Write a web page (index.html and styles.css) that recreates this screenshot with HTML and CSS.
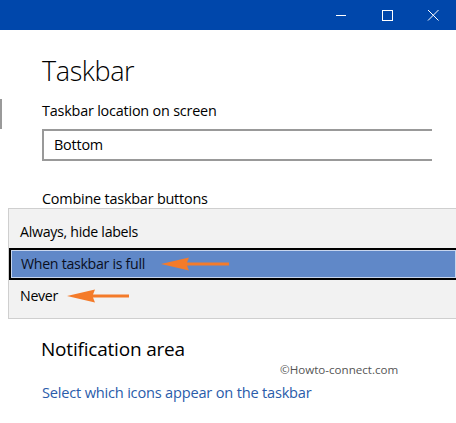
FILE: index.html
```html
<!DOCTYPE html>
<html lang="en">
<head>
<meta charset="utf-8">
<title>Taskbar</title>
<link rel="stylesheet" href="styles.css">
</head>
<body>
<div class="window">
  <header class="titlebar">
    <button class="caption-btn" aria-label="Minimize">
      <svg width="12" height="12" viewBox="0 0 12 12"><path d="M1 6.5H11" stroke="#fff" stroke-width="1"/></svg>
    </button>
    <button class="caption-btn" aria-label="Maximize">
      <svg width="12" height="12" viewBox="0 0 12 12"><rect x="1.5" y="1.5" width="10" height="10" fill="none" stroke="#fff" stroke-width="1"/></svg>
    </button>
    <button class="caption-btn" aria-label="Close">
      <svg width="12" height="12" viewBox="0 0 12 12"><path d="M1 1L11.5 11.5M11.5 1L1 11.5" stroke="#fff" stroke-width="1"/></svg>
    </button>
  </header>

  <main class="content">
    <div class="scroll-thumb"></div>
    <h1 class="page-title">Taskbar</h1>

    <section class="setting">
      <div class="label">Taskbar location on screen</div>
      <div class="combo">Bottom</div>
    </section>

    <section class="setting combine">
      <div class="label">Combine taskbar buttons</div>
    </section>

    <ul class="dropdown">
      <li class="option">Always, hide labels</li>
      <li class="option selected">When taskbar is full
        <svg class="arrow arrow-full" width="70" height="14" viewBox="0 0 70 14"><path d="M0 7L28 0.5L26 5.5H68V8.5H26L28 13.5Z" fill="#f47b2a"/></svg>
      </li>
      <li class="option">Never
        <svg class="arrow arrow-never" width="64" height="14" viewBox="0 0 64 14"><path d="M0 7L28 0.5L26 5.5H62V8.5H26L28 13.5Z" fill="#f47b2a"/></svg>
      </li>
    </ul>

    <h2 class="section-title">Notification area</h2>
    <div class="credit">©Howto-connect.com</div>
    <a class="link" href="#">Select which icons appear on the taskbar</a>
  </main>
</div>
</body>
</html>
```

FILE: styles.css
```css
* { box-sizing: border-box; }

html, body {
  margin: 0;
  padding: 0;
  background: #fff;
}

body {
  font-family: "Open Sans", "Noto Sans", "Liberation Sans", sans-serif;
  color: #000;
  width: 456px;
  height: 423px;
  overflow: hidden;
}

.titlebar {
  height: 30px;
  background: #0047ab;
  display: flex;
  justify-content: flex-end;
}

.caption-btn {
  width: 46px;
  height: 30px;
  border: 0;
  padding: 0;
  background: transparent;
  display: flex;
  align-items: center;
  justify-content: center;
}

.content {
  position: relative;
  padding: 0 0 0 42px;
}

.scroll-thumb {
  position: absolute;
  left: 0;
  top: 69px;
  width: 2px;
  height: 30px;
  background: #9a9a9a;
}

.page-title {
  margin: 0;
  padding-top: 21px;
  font-weight: 300;
  font-size: 27px;
  line-height: 40px;
  letter-spacing: -0.4px;
}

.setting .label {
  font-size: 14.4px;
  line-height: 20px;
  margin-top: 10px;
  letter-spacing: -0.2px;
}

.combo {
  margin-top: 8px;
  height: 32px;
  width: 390px;
  border: 2px solid #999;
  border-right: 0;
  padding-left: 10px;
  font-size: 14.4px;
  line-height: 27px;
  letter-spacing: -0.2px;
}

.combine .label {
  margin-top: 28px;
}

.dropdown {
  list-style: none;
  margin: -1px 0 0 -34px;
  padding: 7px 0 6px 0;
  background: #f2f2f2;
  border: 1px solid #cfcfcf;
  border-right: 0;
  width: 448px;
}

.option {
  position: relative;
  height: 32px;
  padding-left: 11px;
  font-size: 14.2px;
  line-height: 31px;
  letter-spacing: -0.3px;
}

.option.selected {
  background: #6088c8;
  border: 2px solid #000;
  border-right: 0;
  box-shadow: inset 0 0 0 1px #c8d6ee;
  line-height: 27px;
  padding-left: 10px;
  color: #0a0f1e;
}

.arrow {
  position: absolute;
  top: 50%;
  transform: translateY(-50%);
}

.arrow-full { left: 150px; }
.arrow-never { left: 58px; }

.section-title {
  margin: 17px 0 0 -1px;
  font-weight: 400;
  font-size: 19px;
  line-height: 26px;
  letter-spacing: -0.2px;
}

.credit {
  margin-left: 238px;
  margin-top: 0;
  font-size: 11.6px;
  line-height: 16px;
  color: #555;
}

.link {
  display: block;
  margin-top: 4px;
  font-size: 14.6px;
  line-height: 20px;
  color: #2a5caa;
  text-decoration: none;
  letter-spacing: -0.2px;
}
```
